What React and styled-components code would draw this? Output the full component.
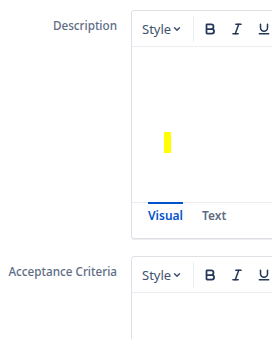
import React from "react";
import styled, { createGlobalStyle } from "styled-components";
import { Bold, Italic, Underline, ChevronDown } from "lucide-react";

const GlobalStyle = createGlobalStyle`
  html, body {
    margin: 0;
    padding: 0;
    background: #ffffff;
    overflow: hidden;
  }
  body {
    font-family: "Noto Sans", "Open Sans", sans-serif;
    color: #172b4d;
  }
`;

const Page = styled.div`
  display: flex;
  flex-direction: column;
  gap: 17px;
  padding-top: 10px;
  width: 420px;
`;

const FieldRow = styled.div`
  display: grid;
  grid-template-columns: 117px 1fr;
  column-gap: 14px;
`;

const FieldLabel = styled.div`
  text-align: right;
  font-size: 11.7px;
  line-height: 16px;
  font-weight: 500;
  color: #5e6c84;
  padding-top: 7px;
  white-space: nowrap;
`;

const Editor = styled.div`
  border: 1px solid #dfe1e6;
  border-radius: 3px;
  box-shadow: 0 1px 0 rgba(9, 30, 66, 0.08);
  background: #fff;
  display: flex;
  flex-direction: column;
  height: ${(p) => p.height}px;
  overflow: hidden;
`;

const Toolbar = styled.div`
  display: flex;
  align-items: center;
  height: 35px;
  border-bottom: 1px solid #ebecf0;
  padding-left: 10px;
  color: #42526e;
`;

const StyleMenu = styled.div`
  display: flex;
  align-items: center;
  gap: 1px;
  font-size: 13px;
  color: #42526e;
  padding-right: 11px;
`;

const Separator = styled.div`
  width: 1px;
  height: 26px;
  background: #ebecf0;
  margin-right: 9px;
`;

const IconButton = styled.div`
  width: 27px;
  display: flex;
  align-items: center;
  justify-content: flex-start;
  color: #253858;
`;

const Content = styled.div`
  flex: 1;
  position: relative;
`;

const Caret = styled.div`
  position: absolute;
  left: 32px;
  top: 85px;
  width: 7px;
  height: 21px;
  background: #ffff00;
`;

const Tabs = styled.div`
  display: flex;
  gap: 19px;
  height: 35px;
  border-top: 1px solid #ebecf0;
  padding-left: 16px;
`;

const Tab = styled.div`
  font-size: 12px;
  font-weight: 600;
  color: ${(p) => (p.active ? "#0052cc" : "#5e6c84")};
  border-top: 2px solid ${(p) => (p.active ? "#0052cc" : "transparent")};
  margin-top: -1px;
  padding-top: 3px;
  line-height: 18px;
`;

function RichEditor({ height, withTabs, caret }) {
  return (
    <Editor height={height}>
      <Toolbar>
        <StyleMenu>
          Style
          <ChevronDown size={10} strokeWidth={3.5} />
        </StyleMenu>
        <Separator />
        <IconButton>
          <Bold size={14} strokeWidth={3} />
        </IconButton>
        <IconButton>
          <Italic size={14} strokeWidth={2.6} />
        </IconButton>
        <IconButton>
          <Underline size={14} strokeWidth={2.6} />
        </IconButton>
      </Toolbar>
      <Content>{caret && <Caret />}</Content>
      {withTabs && (
        <Tabs>
          <Tab active>Visual</Tab>
          <Tab>Text</Tab>
        </Tabs>
      )}
    </Editor>
  );
}

export default function App() {
  return (
    <>
      <GlobalStyle />
      <Page>
        <FieldRow>
          <FieldLabel>Description</FieldLabel>
          <RichEditor height={227} withTabs caret />
        </FieldRow>
        <FieldRow>
          <FieldLabel>Acceptance Criteria</FieldLabel>
          <RichEditor height={120} />
        </FieldRow>
      </Page>
    </>
  );
}
